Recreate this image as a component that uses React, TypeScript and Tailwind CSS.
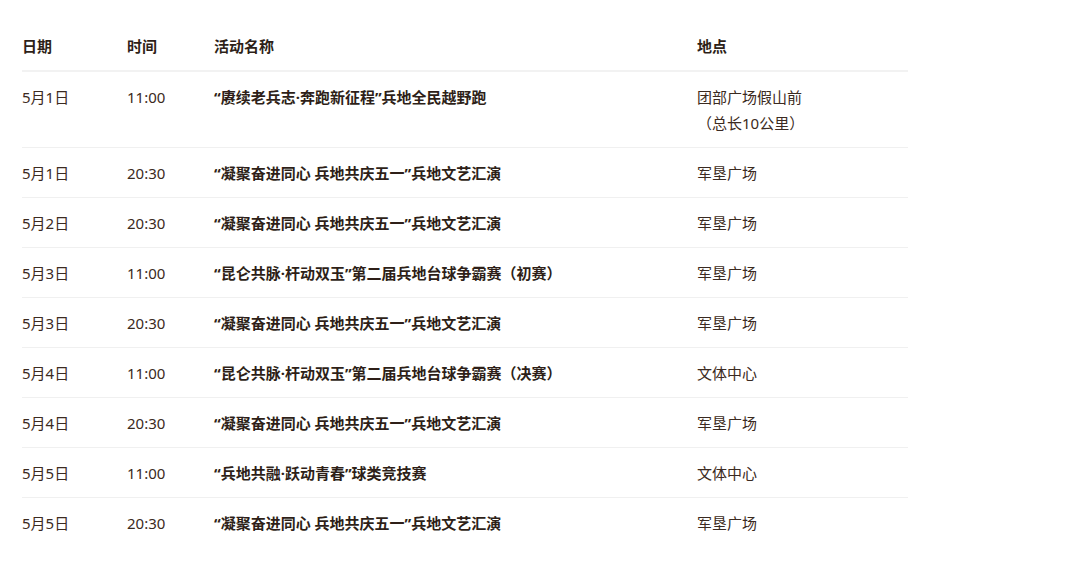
import React from 'react';

type Row = {
  date: string;
  time: string;
  name: string;
  place: React.ReactNode;
};

const rows: Row[] = [
  {
    date: '5月1日',
    time: '11:00',
    name: '“赓续老兵志·奔跑新征程”兵地全民越野跑',
    place: (
      <>
        团部广场假山前
        <br />
        （总长10公里）
      </>
    ),
  },
  { date: '5月1日', time: '20:30', name: '“凝聚奋进同心 兵地共庆五一”兵地文艺汇演', place: '军垦广场' },
  { date: '5月2日', time: '20:30', name: '“凝聚奋进同心 兵地共庆五一”兵地文艺汇演', place: '军垦广场' },
  { date: '5月3日', time: '11:00', name: '“昆仑共脉·杆动双玉”第二届兵地台球争霸赛（初赛）', place: '军垦广场' },
  { date: '5月3日', time: '20:30', name: '“凝聚奋进同心 兵地共庆五一”兵地文艺汇演', place: '军垦广场' },
  { date: '5月4日', time: '11:00', name: '“昆仑共脉·杆动双玉”第二届兵地台球争霸赛（决赛）', place: '文体中心' },
  { date: '5月4日', time: '20:30', name: '“凝聚奋进同心 兵地共庆五一”兵地文艺汇演', place: '军垦广场' },
  { date: '5月5日', time: '11:00', name: '“兵地共融·跃动青春”球类竞技赛', place: '文体中心' },
  { date: '5月5日', time: '20:30', name: '“凝聚奋进同心 兵地共庆五一”兵地文艺汇演', place: '军垦广场' },
];

function App() {
  return (
    <div
      className="min-h-screen w-full bg-white pl-[22px] pt-[34px] text-[15px] text-[#3b2a21]"
      style={{ fontFamily: '"Noto Sans", "Noto Sans CJK SC", sans-serif' }}
    >
      <table className="w-[886px] table-fixed border-collapse text-left">
        <colgroup>
          <col className="w-[105px]" />
          <col className="w-[87px]" />
          <col className="w-[483px]" />
          <col className="w-[211px]" />
        </colgroup>
        <thead>
          <tr className="border-b-2 border-[#f2f2f2] font-bold text-[#2e1f18]">
            <th className="pb-[11px] align-top leading-[25px]">日期</th>
            <th className="pb-[11px] align-top leading-[25px]">时间</th>
            <th className="pb-[11px] align-top leading-[25px]">活动名称</th>
            <th className="pb-[11px] align-top leading-[25px]">地点</th>
          </tr>
        </thead>
        <tbody>
          {rows.map((r, i) => (
            <tr
              key={i}
              className={i < rows.length - 1 ? 'border-b border-[#f0f0f0]' : ''}
            >
              <td className="pb-[11px] pt-3 align-top leading-[26px]">{r.date}</td>
              <td className="pb-[11px] pt-3 align-top leading-[26px]">{r.time}</td>
              <td className="pb-[11px] pt-3 align-top font-bold leading-[26px] text-[#2e1f18]">{r.name}</td>
              <td className="pb-[11px] pt-3 align-top leading-[26px]">{r.place}</td>
            </tr>
          ))}
        </tbody>
      </table>
    </div>
  );
}

export default App;
